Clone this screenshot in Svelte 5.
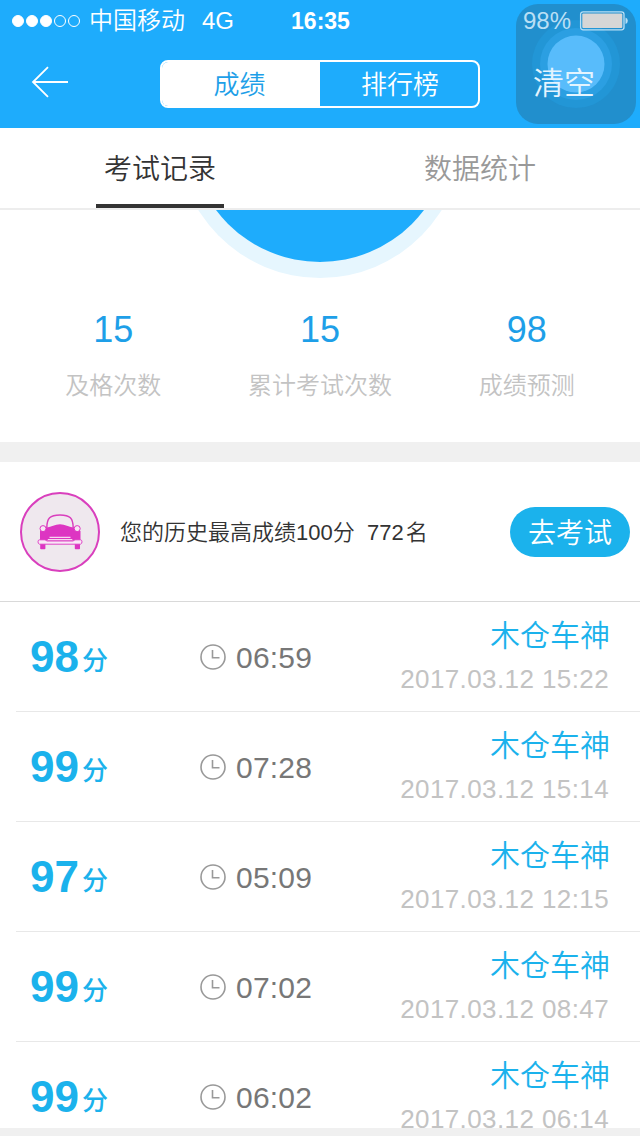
<script>
  const carrier = '中国移动';
  const signal = [true, true, true, false, false];

  const stats = [
    { value: 15, label: '及格次数' },
    { value: 15, label: '累计考试次数' },
    { value: 98, label: '成绩预测' }
  ];

  const records = [
    { score: 98, time: '06:59', name: '木仓车神', date: '2017.03.12 15:22' },
    { score: 99, time: '07:28', name: '木仓车神', date: '2017.03.12 15:14' },
    { score: 97, time: '05:09', name: '木仓车神', date: '2017.03.12 12:15' },
    { score: 99, time: '07:02', name: '木仓车神', date: '2017.03.12 08:47' },
    { score: 99, time: '06:02', name: '木仓车神', date: '2017.03.12 06:14' }
  ];

  let view = $state('score');
  let tab = $state('records');
</script>

<div class="screen">
  <header>
    <div class="status">
      <div class="status-left">
        <div class="signal">
          {#each signal as on}
            <i class:on></i>
          {/each}
        </div>
        <span class="carrier">{carrier}</span>
        <span class="network">4G</span>
      </div>
      <b class="clock">16:35</b>
      <div class="status-right">
        <span>98%</span>
        <svg width="50" height="20" viewBox="0 0 50 20">
          <rect x="1.6" y="0.8" width="43.4" height="18" rx="2.5" fill="none" stroke="#b9dff5" stroke-width="1.3" />
          <rect x="3.3" y="2.5" width="40" height="14.6" rx="1" fill="#d6d6d6" />
          <path d="M46.5 6.5q2.3 .8 2.3 3.3t-2.3 3.3z" fill="#b9dff5" />
        </svg>
      </div>
    </div>

    <nav>
      <button class="back" aria-label="返回">
        <svg width="38" height="32" viewBox="0 0 38 32" fill="none" stroke="#fff" stroke-width="1.8">
          <path d="M17 1.2L2 16L17 30.8M2 16H37" />
        </svg>
      </button>
      <div class="segment">
        <button class:active={view === 'score'} onclick={() => (view = 'score')}>成绩</button>
        <button class:active={view === 'rank'} onclick={() => (view = 'rank')}>排行榜</button>
      </div>
      <button class="clear">清空</button>
    </nav>

    <div class="assistive">
      <svg width="120" height="120" viewBox="0 0 120 120">
        <circle cx="60" cy="60" r="44" fill="#2296d6" />
        <circle cx="60" cy="60" r="36" fill="#2b9fe2" />
        <circle cx="60" cy="60" r="28.5" fill="#58bcfb" />
      </svg>
    </div>
  </header>

  <div class="tabs">
    <button class:active={tab === 'records'} onclick={() => (tab = 'records')}>考试记录</button>
    <button class:active={tab === 'stats'} onclick={() => (tab = 'stats')}>数据统计</button>
  </div>

  <section class="summary">
    <svg class="dial" width="292" height="68" viewBox="0 0 292 68">
      <ellipse cx="146" cy="-78" rx="144" ry="146" fill="#e6f6fe" />
      <circle cx="146" cy="-78" r="130" fill="#1eacfc" />
    </svg>
    <div class="stats">
      {#each stats as stat}
        <div class="stat">
          <strong>{stat.value}</strong>
          <span>{stat.label}</span>
        </div>
      {/each}
    </div>
  </section>

  <section class="best">
    <svg class="avatar" width="80" height="80" viewBox="0 0 80 80">
      <circle cx="40" cy="40" r="39" fill="#efe8ee" stroke="#d93fbd" stroke-width="2" />
      <path d="M26.8 36C26.8 26 30 22.9 40 22.9S53.2 26 53.2 36" fill="#f1e8f0" stroke="#d93fbd" stroke-width="1.5" />
      <path d="M20 39L27 35.5C31 35 35 32.2 40 32.2s9 2.800 13 3.300l7.500 3.500v9.500H20z" fill="#dd35c2" />
      <circle cx="23" cy="36.6" r="3" fill="#f7e6f4" stroke="#dd35c2" stroke-width="1" />
      <circle cx="57.2" cy="36.6" r="3" fill="#f7e6f4" stroke="#dd35c2" stroke-width="1" />
      <path d="M29.500 45.300h21M27.800 47.500h24.500" stroke="#f6d8f0" stroke-width="1.200" />
      <path d="M20.200 52h5.200v4.500q0 .8-.8 .8h-3.600q-.8 0-.8-.8zM54.800 52h5.200v4.500q0 .8-.8 .8h-3.600q-.8 0-.8-.8z" fill="#dd35c2" />
      <path d="M19.500 47.800h5.500l2 1.200h26l2-1.200h5.500q1.500 .2 1.500 2t-1.500 2.400h-41q-1.500-.4-1.500-2.400t1.500-2z" fill="#f9e8f6" stroke="#dd35c2" stroke-width=".9" />
    </svg>
    <p>您的历史最高成绩100分{'  '}772<span class="unit">名</span></p>
    <button class="go">去考试</button>
  </section>

  <ul class="records">
    {#each records as record}
      <li>
        <div class="score"><b>{record.score}</b><span>分</span></div>
        <div class="time">
          <svg width="26" height="26" viewBox="0 0 26 26" fill="none" stroke="#999" stroke-width="1.6">
            <circle cx="13" cy="13" r="12" />
            <path d="M12.5 6v7.700h7" />
          </svg>
          <span>{record.time}</span>
        </div>
        <div class="info">
          <span class="name">{record.name}</span>
          <span class="date">{record.date}</span>
        </div>
      </li>
    {/each}
  </ul>
  <div class="bottom"></div>
</div>

<style>
  :global(body) {
    margin: 0;
  }

  .screen {
    display: flex;
    flex-direction: column;
    width: 640px;
    height: 1136px;
    overflow: hidden;
    background: #fff;
    font-family: 'Liberation Sans', 'Noto Sans CJK SC', sans-serif;
    font-weight: 350;
  }

  button {
    padding: 0;
    border: 0;
    background: none;
    color: inherit;
    font: inherit;
  }

  svg {
    display: block;
  }

  header {
    position: relative;
    flex: none;
    height: 128px;
    background: #1eacfc;
    color: #fff;
  }

  .status {
    position: relative;
    z-index: 1;
    display: grid;
    grid-template-columns: 1fr auto 1fr;
    align-items: center;
    height: 40px;
    padding: 0 11px 0 12px;
    font-size: 24px;
    line-height: 42px;
  }

  .status-left,
  .status-right {
    display: flex;
    align-items: center;
  }

  .signal {
    display: flex;
    gap: 2px;
  }

  .signal i {
    box-sizing: border-box;
    width: 12px;
    height: 12px;
    border: 1px solid #fff;
    border-radius: 50%;
  }

  .signal i.on {
    background: #fff;
  }

  .carrier {
    margin-left: 9px;
  }

  .network {
    margin-left: 17px;
  }

  .clock {
    font-size: 23px;
    font-weight: 700;
  }

  .status-right {
    justify-content: flex-end;
    gap: 8px;
    color: #b9dff5;
  }

  nav {
    position: relative;
    z-index: 1;
    display: grid;
    grid-template-columns: 160px 320px 160px;
    align-items: center;
    height: 88px;
  }

  .back {
    justify-self: start;
    margin: -4px 0 0 31px;
  }

  .segment {
    box-sizing: border-box;
    display: grid;
    grid-template-columns: 1fr 1fr;
    height: 48px;
    border: 2px solid #fff;
    border-radius: 8px;
    overflow: hidden;
    font-size: 26px;
    line-height: 46px;
  }

  .segment button {
    height: 44px;
    padding-left: 2px;
  }

  .segment .active {
    padding: 0 3px 0 0;
    background: #fff;
    color: #1e9fe8;
  }

  .clear {
    justify-self: start;
    margin-left: 53px;
    font-size: 31px;
    line-height: 44px;
    color: #e4f4fe;
  }

  .assistive {
    position: absolute;
    top: 4px;
    left: 516px;
    width: 120px;
    height: 120px;
    border-radius: 22px;
    background: #218fcd;
  }

  .tabs {
    flex: none;
    display: grid;
    grid-template-columns: 1fr 1fr;
    justify-items: center;
    height: 80px;
    border-bottom: 2px solid #ededed;
    color: #999;
    font-size: 28px;
  }

  .tabs button {
    box-sizing: border-box;
    width: 128px;
    height: 80px;
    padding-top: 2px;
    border-bottom: 4px solid transparent;
  }

  .tabs .active {
    border-color: #333;
    color: #333;
  }

  .summary {
    flex: none;
    height: 232px;
    border-bottom: 20px solid #f0f0f0;
  }

  .dial {
    margin: 0 auto;
  }

  .stats {
    display: grid;
    grid-template-columns: repeat(3, 1fr);
    padding: 30px 10px 0;
  }

  .stat {
    display: flex;
    flex-direction: column;
    align-items: center;
    gap: 19px;
  }

  .stat strong {
    font-size: 36px;
    font-weight: 400;
    line-height: 44px;
    color: #1e9fe8;
  }

  .stat span {
    font-size: 24px;
    line-height: 30px;
    color: #c3c3c3;
  }

  .best {
    box-sizing: border-box;
    flex: none;
    display: flex;
    align-items: center;
    height: 140px;
    padding: 0 10px 0 20px;
    border-bottom: 1px solid #d9d9d9;
  }

  .best p {
    flex: 1;
    margin: -3px 0 0 20px;
    white-space: pre;
    font-size: 22px;
    color: #333;
  }

  .unit {
    margin-left: 2px;
  }

  .go {
    width: 120px;
    height: 50px;
    padding-top: 3px;
    border-radius: 25px;
    background: #1bb2ec;
    color: #fff;
    font-size: 28px;
    line-height: 47px;
  }

  .records {
    flex: 1;
    min-height: 0;
    margin: 0;
    padding: 0 0 0 16px;
    overflow: hidden;
    list-style: none;
  }

  li {
    box-sizing: border-box;
    display: grid;
    grid-template-columns: 170px 1fr auto;
    height: 110px;
    padding: 0 30px 0 14px;
    border-bottom: 1px solid #e8e8e8;
  }

  .score {
    display: flex;
    align-items: baseline;
    gap: 3px;
    height: 109px;
    line-height: 110px;
    color: #1bb2ec;
  }

  .score b {
    font-size: 44px;
    font-weight: 700;
  }

  .score span {
    margin-top: -2px;
    padding-bottom: 2px;
    font-size: 26px;
    font-weight: 500;
    transform: translateY(-2px);
  }

  .time {
    display: flex;
    align-items: center;
    gap: 10px;
    height: 109px;
    font-size: 30px;
    letter-spacing: 0.2px;
    color: #777;
  }

  .time span {
    padding-top: 2px;
  }

  .info {
    display: flex;
    flex-direction: column;
    align-items: flex-end;
    padding-top: 12px;
  }

  .name {
    font-size: 30px;
    line-height: 44px;
    color: #1bb2ec;
  }

  .date {
    margin-right: 1px;
    font-size: 26px;
    line-height: 42px;
    letter-spacing: 0.4px;
    color: #c3c3c3;
  }

  .bottom {
    flex: none;
    height: 8px;
    background: #f0f0f0;
  }
</style>
